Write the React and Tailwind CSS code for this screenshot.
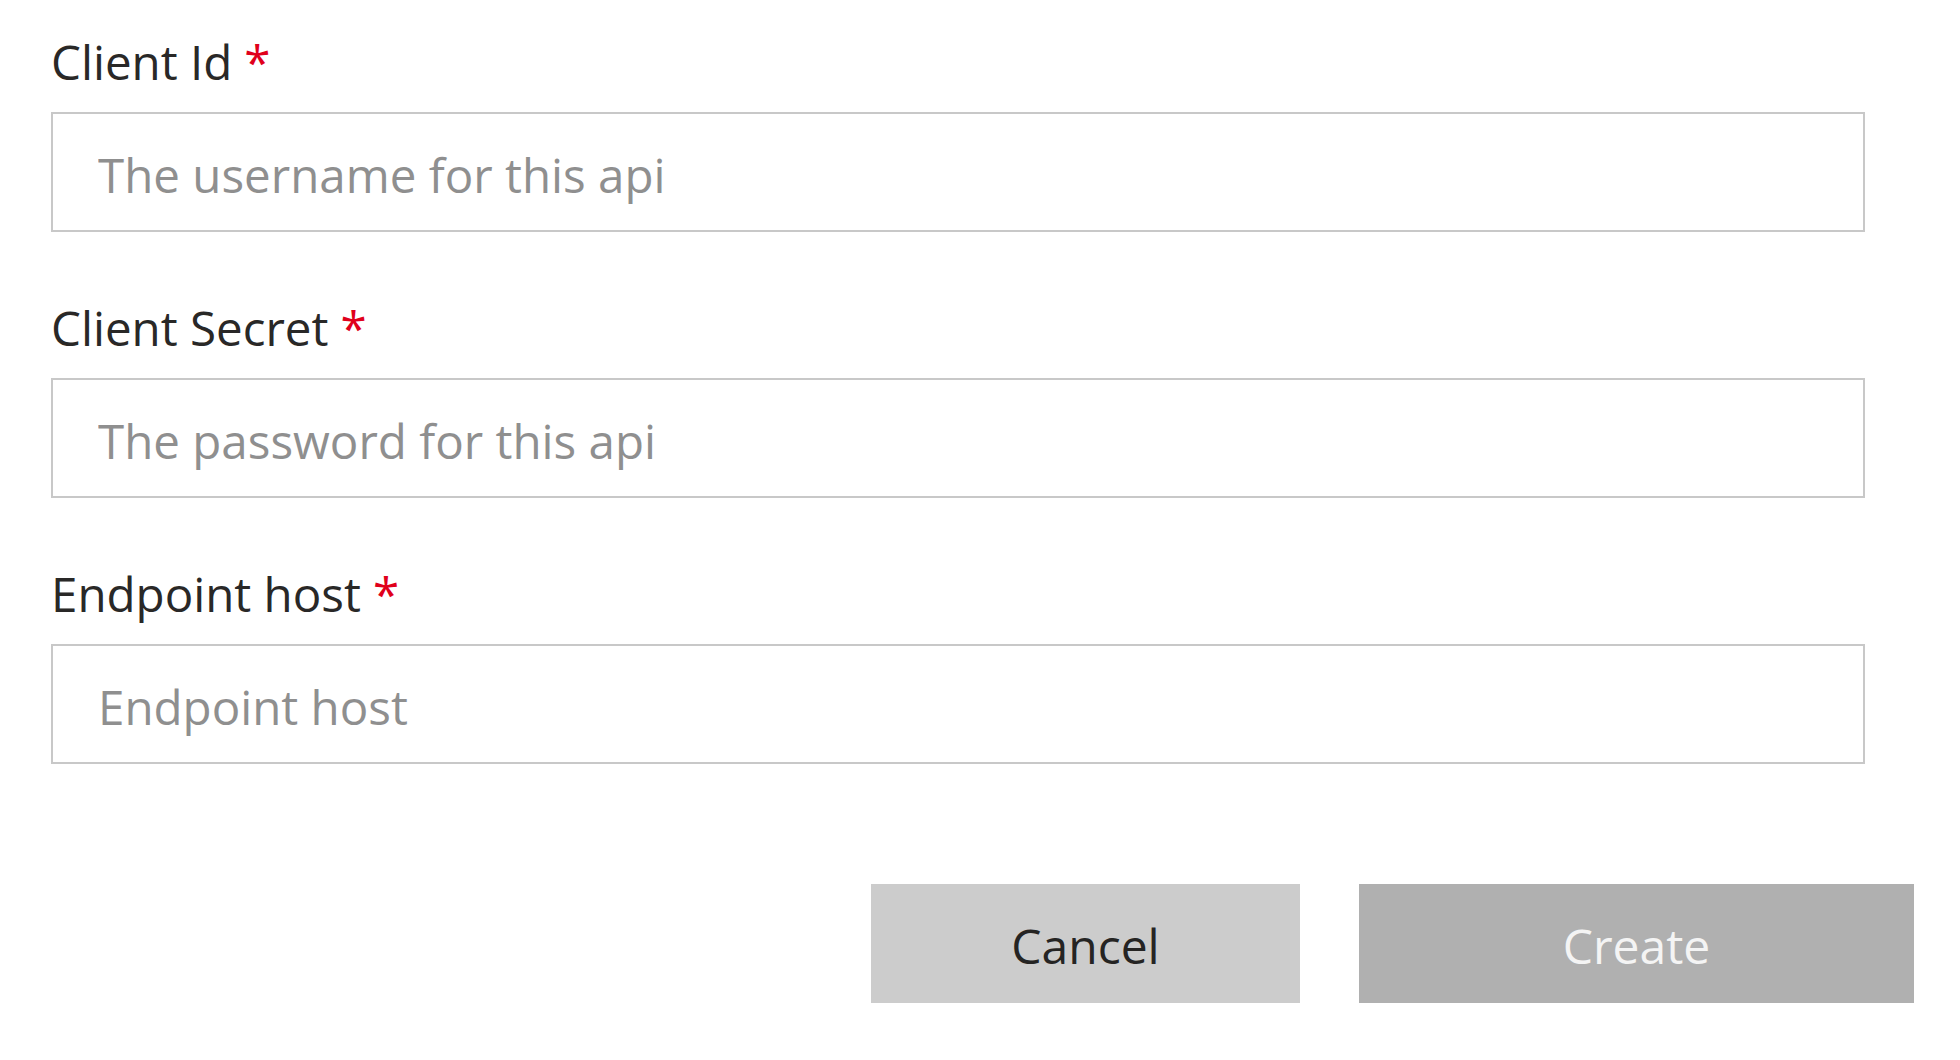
import React from 'react';

const fields = [
  { label: 'Client Id', placeholder: 'The username for this api' },
  { label: 'Client Secret', placeholder: 'The password for this api' },
  { label: 'Endpoint host', placeholder: 'Endpoint host' },
];

const Field = ({ label, placeholder, first }) => (
  <div className={first ? '' : 'mt-[66px]'}>
    <label className="block text-[47.5px] leading-[60px] text-[#292827]">
      {label}
      <span className="ml-[12px] text-[#e0001b]">*</span>
    </label>
    <input
      type="text"
      placeholder={placeholder}
      className="mt-[20px] block h-[120px] w-[1814px] border-2 border-[#c8c8c8] bg-white pl-[45px] pt-[5px] text-[47.5px] text-[#292827] outline-none placeholder:text-[#8f8f8f]"
    />
  </div>
);

export default function App() {
  return (
    <div
      className="h-[1060px] w-[1960px] overflow-hidden bg-white pl-[51px] pt-[32px]"
      style={{ fontFamily: '"Open Sans", "Noto Sans", sans-serif' }}
    >
      {fields.map((f, i) => (
        <Field key={f.label} {...f} first={i === 0} />
      ))}
      <div className="mt-[120px] flex justify-end gap-[59px] pr-[46px]">
        <button className="h-[119px] w-[429px] bg-[#cccccc] pt-[4px] text-[48px] text-[#252423]">
          Cancel
        </button>
        <button className="h-[119px] w-[555px] bg-[#b0b0b0] pt-[4px] text-[48px] text-[#f4f4f4]">
          Create
        </button>
      </div>
    </div>
  );
}
